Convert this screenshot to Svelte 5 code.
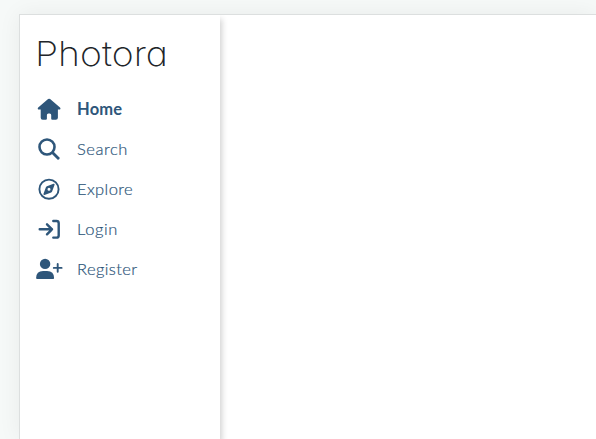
<script>
  const items = [
    { label: 'Home', icon: 'home', active: true, spacing: 0.2 },
    { label: 'Search', icon: 'search', spacing: 0.55 },
    { label: 'Explore', icon: 'explore', spacing: 0.4 },
    { label: 'Login', icon: 'login', spacing: 0.6 },
    { label: 'Register', icon: 'register', spacing: 0.4 }
  ];
</script>

<div class="page">
  <div class="shell">
    <aside>
      <h1>Photora</h1>
      <nav>
        {#each items as item}
          <a href="#{item.icon}" class:active={item.active}>
            <svg viewBox="0 0 32 32" aria-hidden="true">
              {#if item.icon === 'home'}
                <path class="fill" d="M14.1 6.1q1-.8 2 0l9.9 8.5q.7.7.4 1.3-.3.7-1 .7h-1.5v8.1q0 2.1-2.1 2.1h-3.500q-1.100 0-1.100-1.100v-3.800q0-1.500-1.500-1.500h-1.300q-1.500 0-1.500 1.500v3.800q0 1.100-1.100 1.100H8.700q-2 0-2-2.100v-8.100H4.900q-.8 0-1.100-.7-.3-.7.4-1.300z" />
              {:else if item.icon === 'search'}
                <circle cx="13" cy="14" r="7.5" stroke-width="2.6" />
                <path d="m18.7 19.7 5.5 5.6" stroke-width="2.8" />
              {:else if item.icon === 'explore'}
                <circle cx="15" cy="16.2" r="9.6" stroke-width="1.9" />
                <path class="fill" fill-rule="evenodd" d="m12.9 13.2 6.6-2.4q1.5-.3 1 1.1l-2.4 6.7q-.3.6-.9.9l-6.7 2.4q-1.4.3-1-1.1l2.5-6.7q.2-.6.9-.9zM15 14.7a1.5 1.5 0 1 0 0 3 1.5 1.5 0 0 0 0-3z" />
              {:else if item.icon === 'login'}
                <path d="M5.7 16.3H18m-5-5 5 5-5 5" stroke-width="2.4" />
                <path d="M19.3 8h3.2q2.2 0 2.2 2.2v12.2q0 2.2-2.2 2.2h-3.2" stroke-width="2.4" />
              {:else}
                <circle class="fill" cx="11.1" cy="10.9" r="5.2" />
                <path class="fill" d="M2.1 25q.1-7.1 7-7.1h4q6.9 0 7 7.1 0 1-1 1h-16q-1 0-1-1z" />
                <path d="M19.8 14.9h7.8m-3.9-3.900v7.800" stroke-width="1.9" />
              {/if}
            </svg>
            <span style:letter-spacing="{item.spacing}px">{item.label}</span>
          </a>
        {/each}
      </nav>
    </aside>
    <main></main>
  </div>
</div>

<style>
  :global(body) {
    background: #f6f9f8;
  }
  .page {
    box-sizing: border-box;
    height: 100vh;
    padding: 14px 0 0 19px;
    overflow: hidden;
  }
  .shell {
    box-sizing: border-box;
    display: flex;
    height: 100%;
    border: solid #dcdfdf;
    border-width: 1px 0 0 1px;
    background: #fff;
    box-shadow: 0 0 22px rgba(0, 0, 0, 0.06);
  }
  aside {
    box-sizing: border-box;
    flex: 0 0 200px;
    padding: 19px 0 0 14px;
    box-shadow: 2px 4px 6px rgba(0, 0, 0, 0.18);
    clip-path: inset(0 -12px 0 0);
  }
  main {
    flex: 1;
  }
  h1 {
    margin: 0 0 15px 1px;
    height: 40px;
    font: 200 34px/40px Inter, sans-serif;
    font-feature-settings: 'cv11';
    letter-spacing: 0;
    transform: scaleX(1.1);
    transform-origin: left;
    color: #212529;
    width: 150px;
  }
  a {
    display: flex;
    align-items: center;
    gap: 11px;
    height: 40px;
    color: #2e567a;
    font: 300 16.5px/24px Lato, sans-serif;
    text-decoration: none;
    -webkit-text-stroke: 0.2px #2e567a;
  }
  .active {
    font-weight: 700;
    -webkit-text-stroke: 0;
  }
  svg {
    width: 32px;
    height: 32px;
    fill: none;
    stroke: #2e567a;
    stroke-linecap: round;
    stroke-linejoin: round;
  }
  .fill {
    fill: #2e567a;
    stroke: none;
  }
</style>
